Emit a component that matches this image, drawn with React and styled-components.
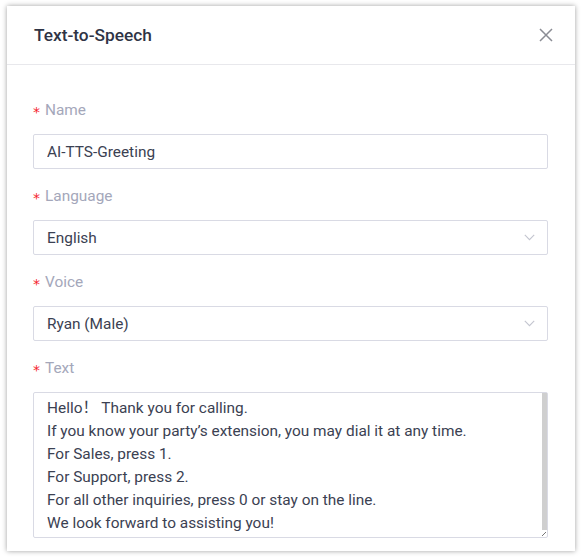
import React from "react";
import styled, { createGlobalStyle } from "styled-components";

const Global = createGlobalStyle`
  html, body { margin: 0; padding: 0; background: #ffffff; }
  body { font-family: Roboto, "Noto Sans CJK SC", "Noto Sans", "Liberation Sans", sans-serif; }
  * { box-sizing: border-box; }
`;

const Page = styled.div`
  padding: 6px 7px 7px 7px;
  width: 582px;
  height: 558px;
`;

const Modal = styled.div`
  width: 568px;
  height: 545px;
  background: #fff;
  box-shadow: 0 0 5px rgba(0, 0, 0, 0.38);
  display: flex;
  flex-direction: column;
`;

const Header = styled.div`
  height: 59px;
  flex: none;
  display: flex;
  align-items: center;
  justify-content: space-between;
  padding: 0 21px 0 27px;
  border-bottom: 1px solid #e8e8ec;
`;

const Title = styled.h1`
  margin: 0;
  font-size: 17.3px;
  font-weight: 500;
  color: #2f3445;
`;

const CloseButton = styled.button`
  width: 16px;
  height: 16px;
  padding: 0;
  border: none;
  background: none;
  display: flex;
  align-items: center;
  justify-content: center;
  cursor: pointer;
`;

const Body = styled.div`
  flex: 1;
  padding: 34px 27px 0 26px;
  display: flex;
  flex-direction: column;
`;

const Field = styled.div`
  display: flex;
  flex-direction: column;
  margin-bottom: ${(p) => (p.$last ? 0 : 16)}px;
`;

const Label = styled.label`
  height: 22px;
  line-height: 22px;
  margin-bottom: 13px;
  font-size: 15.4px;
  color: #a4a7ba;
  display: flex;
  align-items: center;
`;

const Required = styled.span`
  color: #f5222d;
  font-size: 14px;
  font-family: "DejaVu Sans", sans-serif;
  margin-right: 5px;
  position: relative;
  top: 2px;
`;

const Input = styled.input`
  height: 35px;
  width: 100%;
  border: 1px solid #d9dae4;
  border-radius: 2px;
  padding: 0 13px;
  font-family: inherit;
  font-size: 15.4px;
  color: #3b4152;
  outline: none;
`;

const Select = styled.div`
  height: 35px;
  border: 1px solid #d9dae4;
  border-radius: 2px;
  padding: 0 12px 0 13px;
  font-size: 15.4px;
  color: #3b4152;
  display: flex;
  align-items: center;
  justify-content: space-between;
`;

const AreaWrap = styled.div`
  position: relative;
  height: 146px;
`;

const TextArea = styled.textarea`
  display: block;
  width: 100%;
  height: 146px;
  border: 1px solid #d9dae4;
  border-radius: 2px;
  padding: 4px 13px;
  font-family: inherit;
  font-size: 15.4px;
  line-height: 23px;
  color: #3b4152;
  outline: none;
  resize: none;
  overflow: hidden;
`;

const ScrollThumb = styled.div`
  position: absolute;
  top: 1px;
  right: 1px;
  width: 5px;
  height: 137px;
  background: #cfcfcf;
  pointer-events: none;
`;

const Grip = styled.div`
  position: absolute;
  right: 2px;
  bottom: 2px;
  width: 5px;
  height: 5px;
  pointer-events: none;
  background: linear-gradient(135deg, transparent 55%, #777 55%, #777 70%, transparent 70%);
`;

const Chevron = () => (
  <svg width="11" height="7" viewBox="0 0 11 7" fill="none">
    <path d="M0.8 0.8 L5.5 5.6 L10.2 0.8" stroke="#c3c5cf" strokeWidth="1.1" />
  </svg>
);

const text = `Hello！ Thank you for calling.
If you know your party’s extension, you may dial it at any time.
For Sales, press 1.
For Support, press 2.
For all other inquiries, press 0 or stay on the line.
We look forward to assisting you!`;

export default function App() {
  return (
    <>
      <Global />
      <Page>
        <Modal>
          <Header>
            <Title>Text-to-Speech</Title>
            <CloseButton aria-label="Close">
              <svg width="14" height="14" viewBox="0 0 14 14">
                <path d="M1 1 L13 13 M13 1 L1 13" stroke="#8a8c94" strokeWidth="1.5" />
              </svg>
            </CloseButton>
          </Header>
          <Body>
            <Field>
              <Label><Required>*</Required>Name</Label>
              <Input defaultValue="AI-TTS-Greeting" />
            </Field>
            <Field>
              <Label><Required>*</Required>Language</Label>
              <Select>English<Chevron /></Select>
            </Field>
            <Field>
              <Label><Required>*</Required>Voice</Label>
              <Select>Ryan (Male)<Chevron /></Select>
            </Field>
            <Field $last>
              <Label><Required>*</Required>Text</Label>
              <AreaWrap>
                <TextArea defaultValue={text} />
                <ScrollThumb />
                <Grip />
              </AreaWrap>
            </Field>
          </Body>
        </Modal>
      </Page>
    </>
  );
}
